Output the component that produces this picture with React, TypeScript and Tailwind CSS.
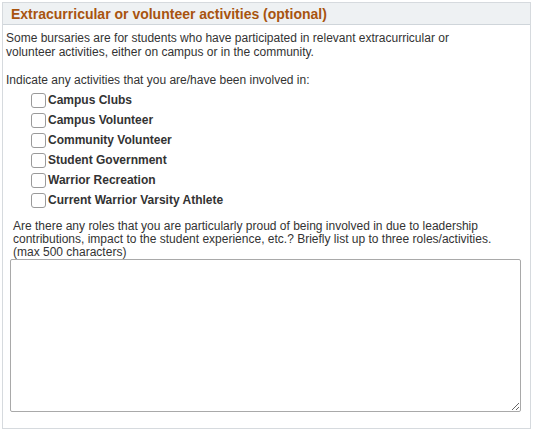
const activities = [
  "Campus Clubs",
  "Campus Volunteer",
  "Community Volunteer",
  "Student Government",
  "Warrior Recreation",
  "Current Warrior Varsity Athlete",
];

export default function App() {
  return (
    <div
      className="w-[533px] h-[432px] bg-white pt-[2px] pl-[2px] text-[12px] text-[#333333]"
      style={{ fontFamily: '"Liberation Sans", Arial, sans-serif' }}
    >
      <div className="w-[529px] h-[427px] border border-[#d6dade] flex flex-col">
        <div className="h-[22px] bg-[#eef1f3] border-b border-[#cfd5da] pl-[8px] flex items-center">
          <h2 className="text-[14px] font-bold text-[#a8540f] leading-none">
            Extracurricular or volunteer activities (optional)
          </h2>
        </div>

        <div className="pl-[3px] pt-[6px] leading-[14px]">
          <p>
            Some bursaries are for students who have participated in relevant extracurricular or
            <br />
            volunteer activities, either on campus or in the community.
          </p>
          <p className="mt-[14px]">Indicate any activities that you are/have been involved in:</p>
        </div>

        <ul className="pl-[28px] pt-[3px] flex flex-col">
          {activities.map((a) => (
            <li key={a} className="h-[20px] flex items-center">
              <span className="w-[15px] h-[15px] border border-[#9a9a9a] rounded-[3px] bg-white mr-[2px]" />
              <span className="font-bold leading-none">{a}</span>
            </li>
          ))}
        </ul>

        <div className="pl-[10px] pt-[10px] leading-[13px]">
          <p>
            Are there any roles that you are particularly proud of being involved in due to leadership
            <br />
            contributions, impact to the student experience, etc.? Briefly list up to three roles/activities.
            <br />
            (max 500 characters)
          </p>
        </div>

        <div className="pl-[7px] pt-0">
          <textarea
            className="block w-[511px] h-[153px] border border-[#a9a9a9] rounded-[2px] resize bg-white outline-none"
            aria-label="Roles"
          />
        </div>
      </div>
    </div>
  );
}
